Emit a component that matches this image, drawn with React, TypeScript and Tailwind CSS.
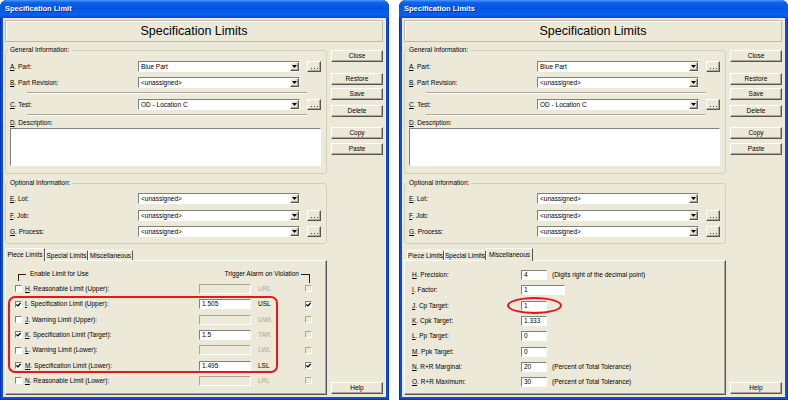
import React from "react";

const sunken = "border border-t-[#808080] border-l-[#808080] border-b-white border-r-white";
const sunkenDim = "border border-t-[#a8a59a] border-l-[#a8a59a] border-b-white border-r-white";
const raised =
  "border border-t-white border-l-white border-b-[#55544e] border-r-[#55544e] shadow-[inset_-1px_-1px_0_#aca899]";

type PieceRow = { k: string; text: string; on?: boolean; value?: string; abbr: string; alarm?: boolean };
type MiscRow = { k: string; text: string; value: string; wide?: boolean; note?: string };

const pieceRows: PieceRow[] = [
  { k: "H", text: "Reasonable Limit (Upper):", abbr: "URL" },
  { k: "I", text: "Specification Limit (Upper):", on: true, value: "1.505", abbr: "USL", alarm: true },
  { k: "J", text: "Warning Limit (Upper):", abbr: "UWL" },
  { k: "K", text: "Specification Limit (Target):", on: true, value: "1.5", abbr: "TAR" },
  { k: "L", text: "Warning Limit (Lower):", abbr: "LWL" },
  { k: "M", text: "Specification Limit (Lower):", on: true, value: "1.495", abbr: "LSL", alarm: true },
  { k: "N", text: "Reasonable Limit (Lower):", abbr: "LRL" },
];

const miscRows: MiscRow[] = [
  { k: "H", text: "Precision:", value: "4", note: "(Digits right of the decimal point)" },
  { k: "I", text: "Factor:", value: "1", wide: true },
  { k: "J", text: "Cp Target:", value: "1" },
  { k: "K", text: "Cpk Target:", value: "1.333" },
  { k: "L", text: "Pp Target:", value: "0" },
  { k: "M", text: "Ppk Target:", value: "0" },
  { k: "N", text: "R+R Marginal:", value: "20", note: "(Percent of Total Tolerance)" },
  { k: "O", text: "R+R Maximum:", value: "30", note: "(Percent of Total Tolerance)" },
];

export default function App() {
  return (
    <div className="w-[788px] h-[400px] bg-white flex gap-[10px] font-['Liberation_Sans',Arial,sans-serif] text-[6.5px] leading-[8px] text-black">
      <Window title="Specification Limit" active={0}>
        <PiecePanel />
      </Window>
      <Window title="Specification Limits" active={2}>
        <MiscPanel />
      </Window>
    </div>
  );
}

function Window({ title, active, children }: { title: string; active: number; children: React.ReactNode }) {
  return (
    <div className="w-[389px] h-[400px] flex flex-col rounded-t-[7px] overflow-hidden bg-[#0b4fd8] shadow-[inset_0_0_0_1px_#0034b8]">
      {/* title bar */}
      <div className="h-[18px] shrink-0 flex items-center pl-[5px] text-white font-bold text-[7.5px] bg-[linear-gradient(to_bottom,#4a9bff_0%,#0f62ea_14%,#0055e5_45%,#0a61ee_82%,#0047d3_100%)] [text-shadow:1px_1px_0_#0b2a82]">
        {title}
      </div>

      <div className="flex-1 mx-[3px] mb-[3px] bg-[#ece9d8] flex flex-col">
        <div className="mt-[2px] ml-[2px] mr-[3px] h-[22px] shrink-0 border border-[#bdbaa9] shadow-[inset_1px_1px_0_#fff] flex items-center justify-center text-[12.5px] leading-none">
          Specification Limits
        </div>

        <div className="mt-[4px] mb-[2px] ml-[2px] mr-[3px] flex-1 flex gap-[4px] min-h-0">
          {/* left column */}
          <div className="w-[322px] flex flex-col">
            <fieldset className="h-[128px] shrink-0 border border-[#d0d0bf] rounded-[3px]">
              <legend className="ml-[2px] px-[2px] leading-[8px]">General Information:</legend>
              <div className="pl-[4px]">
                <div className="mt-[7px] h-[11px] flex items-center">
                  <Label k="A" text="Part:" w="w-[128px]" />
                  <Combo value="Blue Part" />
                  <Dots />
                </div>
                <div className="mt-[5px] h-[11px] flex items-center">
                  <Label k="B" text="Part Revision:" w="w-[128px]" />
                  <Combo value="<unassigned>" />
                </div>
                <Sep />
                <div className="mt-[5px] h-[11px] flex items-center">
                  <Label k="C" text="Test:" w="w-[128px]" />
                  <Combo value="OD - Location C" />
                  <Dots />
                </div>
                <Sep />
                <div className="mt-[3px] h-[8px] flex items-center">
                  <Label k="D" text="Description:" w="w-[128px]" />
                </div>
                <div className={`mt-[1px] h-[38px] w-[311px] bg-white ${sunken}`} />
              </div>
            </fieldset>

            <fieldset className="mt-[5px] h-[65px] shrink-0 border border-[#d0d0bf] rounded-[3px]">
              <legend className="ml-[2px] px-[2px] leading-[8px]">Optional Information:</legend>
              <div className="pl-[4px]">
                <div className="mt-[6px] h-[11px] flex items-center">
                  <Label k="E" text="Lot:" w="w-[128px]" />
                  <Combo value="<unassigned>" />
                </div>
                <div className="mt-[6px] h-[11px] flex items-center">
                  <Label k="F" text="Job:" w="w-[128px]" />
                  <Combo value="<unassigned>" />
                  <Dots />
                </div>
                <div className="mt-[5px] h-[11px] flex items-center">
                  <Label k="G" text="Process:" w="w-[128px]" />
                  <Combo value="<unassigned>" />
                  <Dots />
                </div>
              </div>
            </fieldset>

            <Tabs active={active} />
            <div className="flex-1 relative border border-t-white border-l-white border-b-[#55544e] border-r-[#55544e] shadow-[inset_-1px_-1px_0_#aca899]">
              {children}
            </div>
          </div>

          {/* right column buttons */}
          <div className="w-[52px] flex flex-col">
            <Btn label="Close" className="mt-[4px]" />
            <Btn label="Restore" className="mt-[11px]" />
            <Btn label="Save" className="mt-[3px]" />
            <Btn label="Delete" className="mt-[5px]" />
            <Btn label="Copy" className="mt-[10px]" />
            <Btn label="Paste" className="mt-[4px]" />
            <Btn label="Help" className="mt-auto mb-[1px]" />
          </div>
        </div>
      </div>
    </div>
  );
}

function Label({ k, text, w }: { k: string; text: string; w: string }) {
  return (
    <span className={`${w} shrink-0 whitespace-nowrap`}>
      <u>{k}</u>. {text}
    </span>
  );
}

function Combo({ value }: { value: string }) {
  return (
    <div className={`w-[162px] h-[11px] shrink-0 bg-white flex items-center pl-[2px] ${sunken}`}>
      <span className="flex-1 whitespace-nowrap overflow-hidden">{value}</span>
      <div className={`w-[9px] h-full flex items-center justify-center bg-[#ece9d8] ${raised}`}>
        <svg width="5" height="3" viewBox="0 0 5 3">
          <path d="M0 0H5L2.5 3Z" fill="#000" />
        </svg>
      </div>
    </div>
  );
}

function Dots() {
  return (
    <div className={`ml-[7px] w-[14px] h-[11px] shrink-0 bg-[#ece9d8] flex items-end justify-center pb-[2px] ${raised}`}>
      <svg width="7" height="1" viewBox="0 0 7 1">
        <rect x="0" y="0" width="1" height="1" fill="#444" />
        <rect x="3" y="0" width="1" height="1" fill="#444" />
        <rect x="6" y="0" width="1" height="1" fill="#444" />
      </svg>
    </div>
  );
}

function Sep() {
  return <div className="mt-[4px] ml-[17px] w-[280px] h-[2px] border-t border-t-[#aca899] border-b border-b-white" />;
}

function Btn({ label, className }: { label: string; className: string }) {
  return (
    <div className={`h-[12px] shrink-0 bg-[#ece9d8] flex items-center justify-center ${raised} ${className}`}>
      {label}
    </div>
  );
}

function Tabs({ active }: { active: number }) {
  const labels = ["Piece Limits", "Special Limits", "Miscellaneous"];
  const widths = active === 0 ? ["w-[40px]", "w-[43px]", "w-[45px]"] : ["w-[37px]", "w-[42px]", "w-[47px]"];
  return (
    <div className={`mt-[4px] h-[12px] shrink-0 flex items-end ${active === 0 ? "" : "pl-[3px]"}`}>
      {labels.map((l, i) => (
        <div
          key={l}
          className={`${widths[i]} ${
            i === active ? "h-[13px] -mb-px relative z-10 pb-[1px]" : "h-[10px]"
          } bg-[#ece9d8] border-t border-l border-r border-t-white border-l-white border-r-[#55544e] rounded-t-[1px] flex items-center justify-center whitespace-nowrap`}
        >
          {l}
        </div>
      ))}
    </div>
  );
}

function Check({ on, dim }: { on?: boolean; dim?: boolean }) {
  return (
    <div className={`w-[7px] h-[7px] shrink-0 flex items-center justify-center ${dim ? `bg-[#ece9d8] ${sunkenDim}` : `bg-white ${sunken}`}`}>
      {on && (
        <svg width="5" height="5" viewBox="0 0 5 5">
          <path d="M0.4 2.4L1.9 3.9L4.6 0.9" stroke="#000" strokeWidth="1.3" fill="none" />
        </svg>
      )}
    </div>
  );
}

function PiecePanel() {
  return (
    <div className="flex flex-col">
      <div className="mt-[9px] h-[8px] flex items-center">
        <div className="ml-[12px] mt-[4px] self-start w-[8px] h-[7px] border-t border-l border-[#222]" />
        <span className="ml-[4px] whitespace-nowrap">Enable Limit for Use</span>
        <span className="ml-auto whitespace-nowrap">Trigger Alarm on Violation</span>
        <div className="ml-[2px] mr-[16px] mt-[4px] self-start w-[9px] h-[9px] border-t border-r border-[#222]" />
      </div>
      <div className="mt-[3.33px] flex flex-col">
        {pieceRows.map((r) => (
          <div key={r.k} className="h-[15.33px] flex items-center">
            <div className="ml-[9px]">
              <Check on={r.on} />
            </div>
            <span className="ml-[3px] w-[174px] whitespace-nowrap">
              <u>{r.k}</u>. {r.text}
            </span>
            <div className={`w-[52px] h-[10px] pl-[2px] flex items-center ${r.on ? `bg-white ${sunken}` : `bg-[#ece9d8] ${sunkenDim}`}`}>
              {r.value}
            </div>
            <span className={`ml-[7px] w-[47px] ${r.alarm ? "text-black" : "text-[#aca899]"}`}>{r.abbr}</span>
            <Check on={r.alarm} dim={!r.alarm} />
          </div>
        ))}
      </div>
      {/* annotation */}
      <div className="absolute left-[2px] top-[35px] w-[270px] h-[77px] border-2 border-[#e5161c] rounded-[7px] pointer-events-none" />
    </div>
  );
}

function MiscPanel() {
  return (
    <div className="flex flex-col">
      <div className="mt-[6.33px] flex flex-col">
        {miscRows.map((r) => (
          <div key={r.k} className="h-[15.33px] flex items-center">
            <span className="ml-[7px] w-[109px] whitespace-nowrap">
              <u>{r.k}</u>. {r.text}
            </span>
            <div className={`${r.wide ? "w-[44px]" : "w-[26px]"} h-[10px] pl-[2px] bg-white flex items-center ${sunken}`}>
              {r.value}
            </div>
            {r.note && <span className="ml-[5px] whitespace-nowrap">{r.note}</span>}
          </div>
        ))}
      </div>
      {/* annotation */}
      <div className="absolute left-[102px] top-[36px] w-[55px] h-[17px] border-2 border-[#e5161c] rounded-[50%] pointer-events-none" />
    </div>
  );
}
